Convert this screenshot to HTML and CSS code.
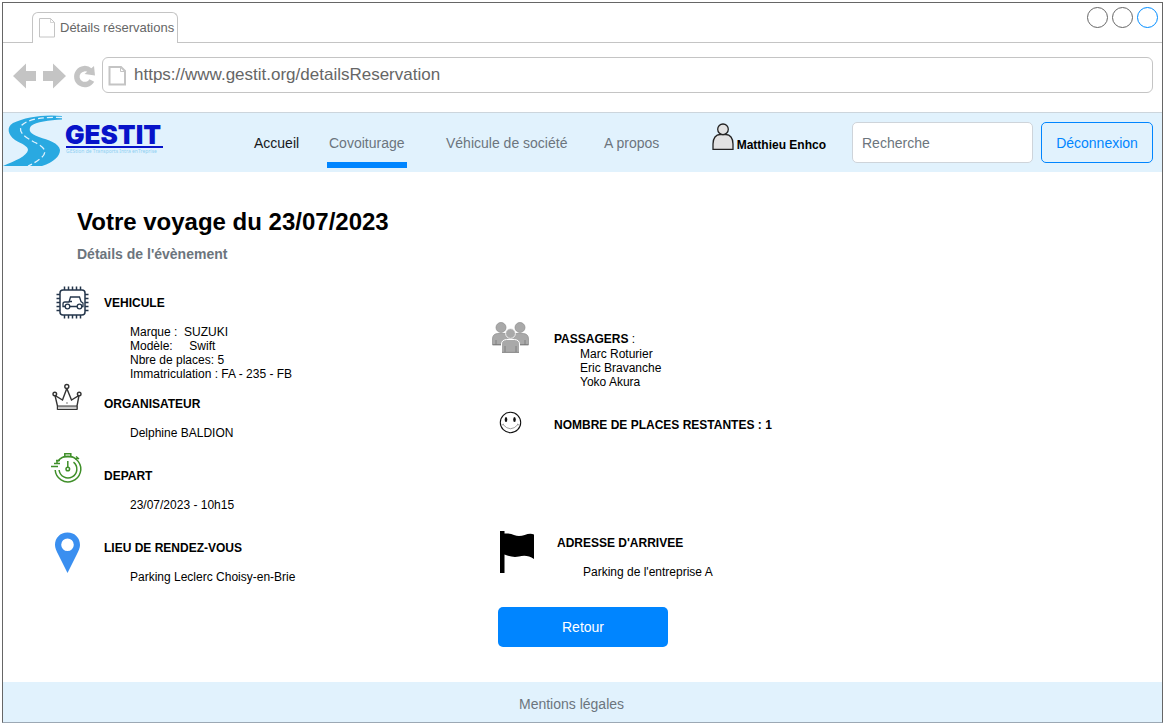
FILE: index.html
```html
<!DOCTYPE html>
<html lang="fr">
<head>
<meta charset="utf-8">
<meta name="viewport" content="width=device-width, initial-scale=1">
<title>Détails réservations</title>
<link rel="stylesheet" href="styles.css">
</head>
<body>
<div class="window">
  <div class="titlebar">
    <div class="tab">
      <svg width="18" height="20" viewBox="0 0 18 20" fill="none" stroke="#c4c4c4" aria-hidden="true"><path d="M1.500.5h11l4 4v14.500h-15z"/><path stroke-width=".7" d="M12.500.5v4h4"/></svg>
      <span>Détails réservations</span>
    </div>
    <div class="window-buttons">
      <button type="button" aria-label="Réduire"></button>
      <button type="button" aria-label="Agrandir"></button>
      <button type="button" class="close" aria-label="Fermer"></button>
    </div>
  </div>
  <div class="toolbar">
    <button type="button" aria-label="Précédent"><svg width="23" height="26" viewBox="0 0 23 26" fill="#c4c4c4"><path d="M0 13 13 .5v7.500h10v10H13v7.500z"/></svg></button>
    <button type="button" aria-label="Suivant"><svg width="23" height="26" viewBox="0 0 23 26" fill="#c4c4c4"><path d="M23 13 10 .5v7.500H0v10h10v7.500z"/></svg></button>
    <button type="button" aria-label="Actualiser"><svg width="22" height="26" viewBox="0 0 22 26"><path d="M18.800 17.500A8 8 0 1 1 17 7.500" fill="none" stroke="#c4c4c4" stroke-width="5.500"/><path d="M21 3l1 9.500-10.500-1.500z" fill="#c4c4c4"/></svg></button>
    <label class="address">
      <svg width="19" height="22" viewBox="0 0 19 22" fill="none" stroke="#c4c4c4" stroke-width="2" aria-hidden="true"><path d="M1.500 3H13l4 4v13.500H1.500z"/><path d="M12.500 3v4.500h4.500" stroke-width="1"/></svg>
      <input type="text" aria-label="Adresse" value="https://www.gestit.org/detailsReservation">
    </label>
  </div>

  <header class="header">
    <a class="logo" href="#" aria-label="GESTIT">
      <svg width="164" height="56" viewBox="0 1 164 56">
        <path fill="#29a9e1" d="M59 4C42 2 22 5 10 11C3 15 5 23 12 28C19 32 25 34 25 38C24 44 12 49 0 54H39C51 50 57 44 57 38C56 31 45 28 36 25C27 22 25 18 28 14C33 10 46 8 59 7.500z"/>
        <path fill="none" stroke="#e1f2fd" stroke-width="1.300" stroke-dasharray="6 3" d="M59 5.500C42 4.500 25 7 19 13C14 20 22 25 31 30C42 35 45 40 38 46C34 49 30 52 25 54"/>
        <text x="62" y="32" class="logo-name">GESTIT</text>
        <path d="M63 35h97" stroke="#0713c9" stroke-width="2"/>
        <text x="63" y="41" class="logo-tagline">GEStion de Transports Intra enTreprise</text>
      </svg>
    </a>
    <nav class="nav" aria-label="Navigation principale">
      <a class="home" href="#">Accueil</a>
      <a class="active" href="#" aria-current="page">Covoiturage</a>
      <a href="#">Véhicule de société</a>
      <a href="#">A propos</a>
    </nav>
    <div class="user">
      <svg width="23" height="28" viewBox="0 0 23 28" fill="#e2e2e2" stroke="#222" stroke-width="1.300" aria-hidden="true"><path d="M1 26.400V21C1 15 4 11.500 8 11.500h6C18 11.500 21 15 21 21v5.400z"/><circle cx="11" cy="6.300" r="5.300"/></svg>
      <strong>Matthieu Enhco</strong>
    </div>
    <form class="search">
      <input type="search" aria-label="Recherche" placeholder="Recherche">
      <button type="button">Déconnexion</button>
    </form>
  </header>

  <main class="main">
    <h1>Votre voyage du 23/07/2023</h1>
    <p class="subtitle">Détails de l'évènement</p>
    <div class="details">
      <div class="column">
        <section class="item">
          <svg class="icon" viewBox="0 0 40 50" fill="none" stroke="#24364b" stroke-width="1.500" aria-hidden="true">
            <rect x="10" y="10" width="25" height="25" rx="3"/>
            <path d="M14.500 10V6.500M18.500 10V6.500M22.500 10V6.500M26.500 10V6.500M30.500 10V6.500M14.500 35v3.500M18.500 35v3.500M22.500 35v3.500M26.500 35v3.500M30.500 35v3.500M10 14.500H6.500M10 18.500H6.500M10 22.500H6.500M10 26.500H6.500M10 30.500H6.500M35 14.500h3.500M35 18.500h3.500M35 22.500h3.500M35 26.500h3.500M35 30.500h3.500"/>
            <path stroke-width="1.300" d="M15 26.500h-2v-2.500q0-2 2-2h4L20.500 17h9l1.500 4.500 2 1.500v3.500h-1M20 26.500h7M19 21.500h3"/>
            <circle cx="17.500" cy="26.500" r="2.300" stroke-width="1.300"/><circle cx="29.500" cy="26.500" r="2.300" stroke-width="1.300"/>
          </svg>
          <div><h2>VEHICULE</h2>
          <p class="text">Marque :  SUZUKI
Modèle:     Swift
Nbre de places: 5
Immatriculation : FA - 235 - FB</p></div>
        </section>
        <section class="item">
          <svg class="icon" viewBox="0 0 40 50" fill="none" stroke="#333" stroke-width="1.400" aria-hidden="true">
            <path d="M7.500 28V25L5 14.500 12.500 19 16.800 7.500 21.500 19 29 14.500 27 25v3z"/>
            <path fill="#ccc" stroke-width="1" d="M7.500 25h19.500v3.500h-19.500z"/>
            <g fill="#fff"><circle cx="16.800" cy="5.500" r="2"/><circle cx="4.800" cy="13" r="1.800"/><circle cx="29.200" cy="13" r="1.800"/></g>
            <circle cx="17" cy="22" r=".4" stroke-width=".6"/>
          </svg>
          <div><h2>ORGANISATEUR</h2>
          <p class="text">Delphine BALDION</p></div>
        </section>
        <section class="item">
          <svg class="icon" viewBox="0 0 40 50" fill="none" stroke="#3f8f29" stroke-width="1.500" aria-hidden="true">
            <path d="M7.700 8.400A12.800 12.800 0 1 1 5.200 17"/>
            <path d="M23.500 9.100A8.900 8.900 0 1 1 9.100 17"/>
            <path d="M14.800 3.500V.8h6V3.500M13.500 3.800h9M26 3.500l3 2.500M25.500 6.500l2-2M17.800 8v6M7 7.500v2.500M6 7.500h4M4 10.500h6M1 13.500h7M4.500 10.500h1"/>
            <circle cx="17.800" cy="16" r="1.800"/>
          </svg>
          <div><h2>DEPART</h2>
          <p class="text">23/07/2023 - 10h15</p></div>
        </section>
        <section class="item">
          <svg class="icon" viewBox="0 0 40 50" aria-hidden="true"><path fill="#3a8ff0" fill-rule="evenodd" d="M17.500 7.500C10 7.500 5 13 5 20c0 3 1.500 6 3 9l9.500 19 9.500-19c1.500-3 3-6 3-9 0-7-5-12.500-12.500-12.500zm0 6a6.300 6.300 0 1 1 0 12.600 6.300 6.300 0 0 1 0-12.600z"/></svg>
          <div><h2>LIEU DE RENDEZ-VOUS</h2>
          <p class="text">Parking Leclerc Choisy-en-Brie</p></div>
        </section>
      </div>

      <div class="column secondary">
        <section class="item compact">
          <svg class="icon" viewBox="0 0 40 50" fill="#a9a9a9" stroke="#8d8d8d" stroke-width=".7" aria-hidden="true">
            <circle cx="11" cy="11.500" r="5"/><circle cx="30" cy="11.500" r="5"/>
            <path d="M2.500 29v-6q0-5 5-5.500h8q5 .5 5 5.500v6zM20.500 29v-6q0-5 5-5.500h8q5 .5 5 5.500v6z"/>
            <path stroke="#fff" stroke-width="1" d="M11.500 37V28q0-4 5-4.500h8q5 .5 5 4.500v9z"/>
            <circle cx="20.500" cy="17.500" r="4.900" stroke="#fff" stroke-width=".8"/>
            <path fill="none" stroke="#777" stroke-width=".8" d="M6 29v-5M35 29v-5M15 36v-6M26 36v-6M12 36.400h17M3 28.600h8M30 28.600h8"/>
          </svg>
          <div><h2>PASSAGERS <span>:</span></h2>
          <p class="text">Marc Roturier
Eric Bravanche
Yoko Akura</p></div>
        </section>
        <section class="item">
          <svg class="icon" viewBox="0 0 40 50" fill="none" stroke="#111" aria-hidden="true">
            <circle cx="20.500" cy="20.500" r="10.200" stroke-width="1.100"/>
            <path fill="none" stroke="#888" stroke-width=".8" d="M13 22.500q7.500 8.500 15 0M12 23l2-1M29 23l-2-1"/>
            <g fill="#111" stroke="none"><ellipse cx="16" cy="17.500" rx="1.300" ry="2.500"/><ellipse cx="24.500" cy="17.500" rx="1.300" ry="2.500"/></g>
          </svg>
          <div><h2>NOMBRE DE PLACES RESTANTES : 1</h2></div>
        </section>
        <section class="item arrival">
          <svg class="icon wide" viewBox="0 0 46 54" aria-hidden="true"><path d="M10 11h4.500v2.500C21 13 25 16 29 16c5 0 10-4 15-1.500v24.500c-5-3.500-10-4-15-2.500-5 1-10 0-14.500-2V53H10z"/></svg>
          <div><h2>ADRESSE D'ARRIVEE</h2>
          <p class="text">Parking de l'entreprise A</p></div>
        </section>
      </div>
      <button class="back" type="button">Retour</button>
    </div>
  </main>

  <footer class="footer"><a href="#">Mentions légales</a></footer>
</div>
</body>
</html>
```
FILE: styles.css
```css
* { box-sizing: border-box; }

body {
  margin: 0;
  padding: 2px 2px 3px;
  min-height: 100vh;
  display: flex;
  font-family: "Liberation Sans", Arial, sans-serif;
  font-size: 14px;
  color: #000;
  background: #fff;
}

button, input { font: inherit; }
svg { display: block; flex: none; }
a { color: inherit; text-decoration: none; }
h1, h2, p { margin: 0; }

.window {
  flex: 1;
  display: flex;
  flex-direction: column;
  border: 1px solid #666;
  border-bottom-color: #9ca8b4;
}

/* Browser chrome */
.titlebar {
  display: flex;
  justify-content: space-between;
  height: 40px;
  padding-left: 29px;
  border-bottom: 1px solid #c4c4c4;
}

.tab {
  display: flex;
  align-items: center;
  gap: 4px;
  height: 31px;
  margin-top: 9px;
  padding: 0 3px 0 5px;
  border: 1px solid #c4c4c4;
  border-bottom: 0;
  border-radius: 6px 6px 0 0;
  background: #fff;
  color: #666;
  font-size: 13px;
}

.tab span { padding-bottom: 2px; }

.window-buttons {
  display: flex;
  gap: 4px;
  padding: 4px 4px 0 0;
}

.window-buttons button {
  width: 21px;
  height: 21px;
  padding: 0;
  border: 1px solid #666;
  border-radius: 50%;
  background: #fff;
}

.window-buttons .close { border-color: #008cff; }

.toolbar {
  display: flex;
  align-items: center;
  gap: 7px;
  padding: 14px 9px 19px 10px;
}

.toolbar button {
  padding: 2px 0 0;
  border: 0;
  background: none;
}

.address {
  flex: 1;
  display: flex;
  align-items: center;
  gap: 7px;
  height: 36px;
  padding: 0 5px;
  border: 1px solid #c4c4c4;
  border-radius: 6px;
}

.address input {
  flex: 1;
  min-width: 0;
  padding: 0;
  border: 0;
  outline: 0;
  background: none;
  color: #666;
  font-size: 17px;
}

/* Site header */
.header {
  display: flex;
  align-items: center;
  height: 60px;
  padding-right: 9px;
  border-top: 1px solid #ccd5dc;
  background: #e1f2fd;
}

.logo { align-self: flex-start; }

.logo-name {
  font: 900 26px Inter, sans-serif;
  fill: #0713c9;
}

.logo-tagline {
  font: 5px "Noto Sans", sans-serif;
  fill: #8fd0f2;
}

.nav {
  display: grid;
  grid-template-columns: 75px 117px 158px auto;
  justify-items: start;
  align-self: stretch;
  padding: 0 0 4px;
  margin-left: 85px;
  color: #6c757d;
}

.nav a {
  display: flex;
  align-items: center;
  padding: 11px 2px 0;
  border-bottom: 6px solid transparent;
  white-space: nowrap;
}

.nav .home { color: #16181b; }
.nav .active { border-color: #0085ff; }

.user {
  display: flex;
  align-items: flex-end;
  gap: 2px;
  margin: 0 26px 12px auto;
  font-size: 12px;
  line-height: 12px;
  white-space: nowrap;
}

.search {
  display: flex;
  gap: 8px;
}

.search input,
.search button {
  height: 41px;
  border-radius: 5px;
}

.search input {
  width: 181px;
  padding: 0 9px;
  border: 1px solid #ced4da;
  background: #fff;
}

.search input::placeholder { color: #6c757d; }

.search button {
  width: 112px;
  padding: 0;
  border: 1px solid #0085ff;
  background: none;
  color: #0085ff;
}

/* Trip details */
.main {
  flex: 1;
  padding: 36px 0 35px 47px;
}

.main h1 {
  padding-left: 27px;
  font-size: 24px;
  line-height: 28px;
}

.subtitle {
  margin-top: 10px;
  padding-left: 27px;
  color: #6c757d;
  font-weight: bold;
  line-height: 16px;
}

.details {
  display: grid;
  grid-template-columns: 55fr 84fr;
  row-gap: 10px;
  margin-top: 18px;
}

.column {
  display: flex;
  flex-direction: column;
}

.secondary { padding: 36px 0 5px; }

.item {
  display: flex;
  gap: 14px;
  font-size: 12px;
  line-height: 14px;
}

.item > div { padding-top: 16px; }

.icon {
  width: 40px;
  height: 50px;
}

.icon.wide {
  width: 46px;
  height: 54px;
}

.item h2 {
  font-size: 12px;
  line-height: 14px;
}

.item h2 span { font-weight: normal; }

.text {
  min-height: 27px;
  margin-top: 15px;
  padding-left: 26px;
  white-space: pre-wrap;
}

.compact .text {
  margin: 1px 0 13px;
}

.secondary .item { gap: 24px; }
.secondary .arrival { gap: 21px; margin-top: auto; }

.back {
  grid-column: 2;
  width: 170px;
  height: 40px;
  margin-left: 8px;
  border: 0;
  border-radius: 5px;
  background: #0085ff;
  color: #fff;
}

.footer {
  display: flex;
  align-items: center;
  justify-content: center;
  height: 40px;
  padding: 4px 22px 0 0;
  background: #e1f2fd;
  color: #6c757d;
}
```
